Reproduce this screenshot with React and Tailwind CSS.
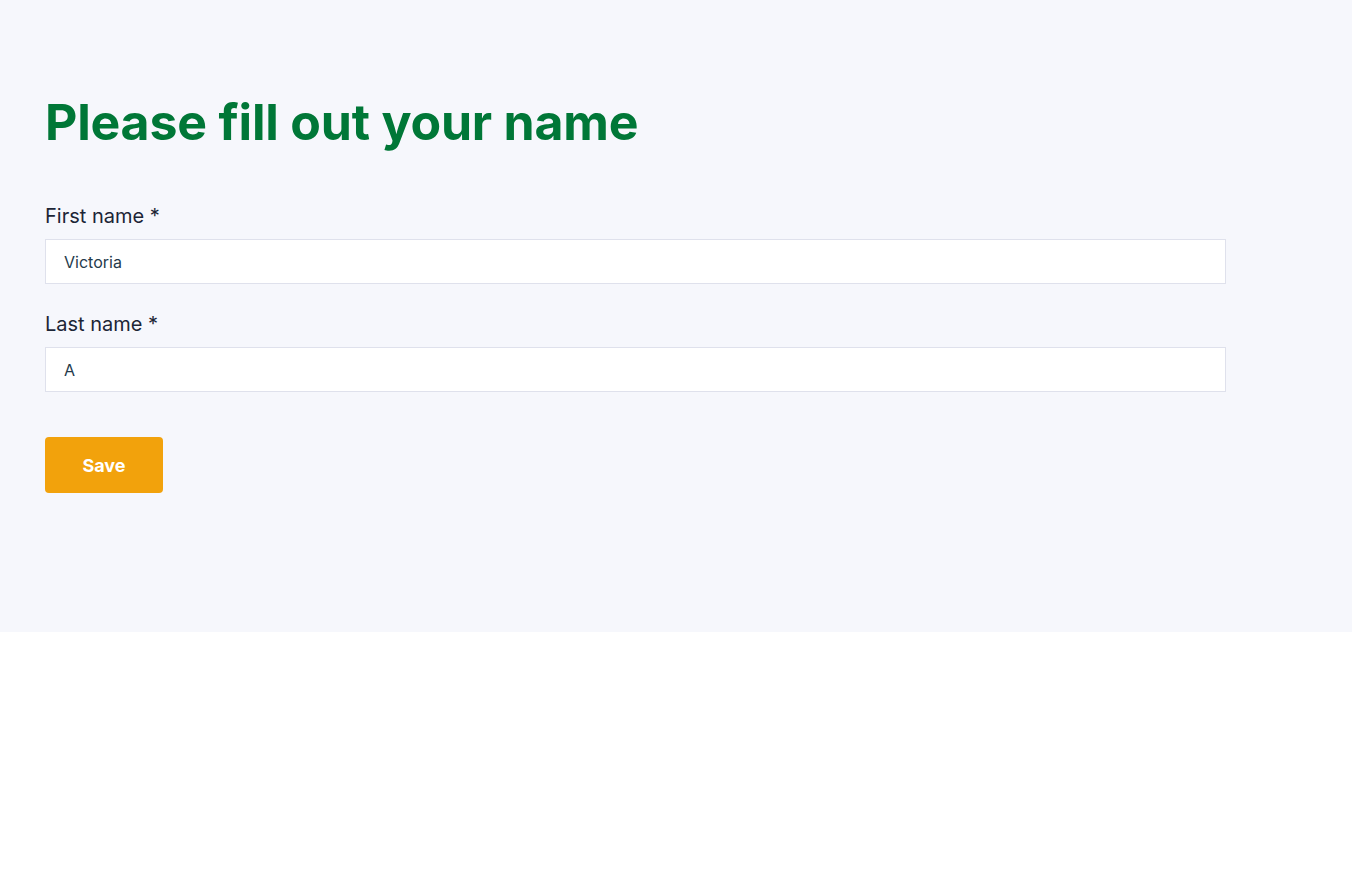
export default function App() {
  return (
    <div className="min-h-[878px] bg-white" style={{ fontFamily: "Inter, 'Noto Sans', sans-serif" }}>
      <div className="h-[632px] bg-[#f6f7fc] px-[45px] pt-[90px]">
        <h1 className="text-[50px] leading-[64px] font-bold text-[#007737] tracking-[-0.2px]">Please fill out your name</h1>
        <div className="mt-[48px] w-[1181px]">
          <label className="block text-[20px] leading-[28px] text-[#1c2536]">First name *</label>
          <input
            defaultValue="Victoria"
            className="mt-[9px] block h-[45px] w-full border border-[#dfe1ec] bg-white px-[18px] text-[16px] text-[#243a4b] outline-none"
          />
          <label className="mt-[26px] block text-[20px] leading-[28px] text-[#1c2536]">Last name *</label>
          <input
            defaultValue="A"
            className="mt-[9px] block h-[45px] w-full border border-[#dfe1ec] bg-white px-[18px] text-[16px] text-[#243a4b] outline-none"
          />
          <button className="mt-[45px] h-[56px] w-[118px] rounded-[4px] bg-[#f2a20c] text-[18px] font-bold text-white">Save</button>
        </div>
      </div>
    </div>
  );
}
